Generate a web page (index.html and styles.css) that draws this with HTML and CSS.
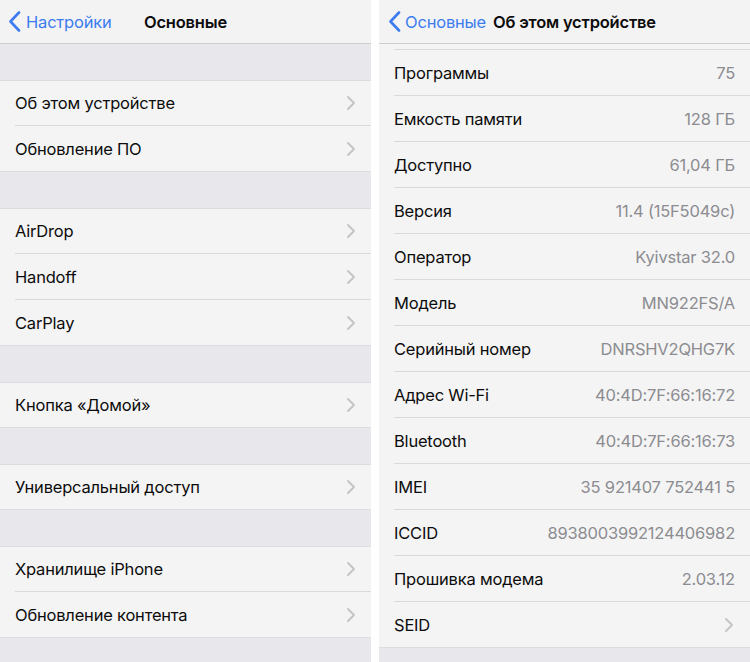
FILE: index.html
```html
<!DOCTYPE html>
<html lang="ru">
<head>
<meta charset="utf-8">
<title>Настройки</title>
<link rel="stylesheet" href="styles.css">
</head>
<body>
<div class="screens">
  <section class="panel">
    <header class="nav">
      <a class="back"><svg class="back-icon" viewBox="0 0 13 21" width="13" height="21"><path d="M11 1.5 L2.5 10.5 L11 19.5" fill="none" stroke="currentColor" stroke-width="2.6" stroke-linecap="round" stroke-linejoin="round"/></svg><span>Настройки</span></a>
      <h1 class="title title-center">Основные</h1>
    </header>
    <div class="content">
      <ul class="group">
        <li class="row"><span class="label">Об этом устройстве</span><svg class="chev" viewBox="0 0 8 14" width="8" height="14"><path d="M1 1 L7 7 L1 13" fill="none" stroke="currentColor" stroke-width="1.8" stroke-linecap="round" stroke-linejoin="round"/></svg></li>
        <li class="row"><span class="label">Обновление ПО</span><svg class="chev" viewBox="0 0 8 14" width="8" height="14"><path d="M1 1 L7 7 L1 13" fill="none" stroke="currentColor" stroke-width="1.8" stroke-linecap="round" stroke-linejoin="round"/></svg></li>
      </ul>
      <ul class="group">
        <li class="row"><span class="label">AirDrop</span><svg class="chev" viewBox="0 0 8 14" width="8" height="14"><path d="M1 1 L7 7 L1 13" fill="none" stroke="currentColor" stroke-width="1.8" stroke-linecap="round" stroke-linejoin="round"/></svg></li>
        <li class="row"><span class="label">Handoff</span><svg class="chev" viewBox="0 0 8 14" width="8" height="14"><path d="M1 1 L7 7 L1 13" fill="none" stroke="currentColor" stroke-width="1.8" stroke-linecap="round" stroke-linejoin="round"/></svg></li>
        <li class="row"><span class="label">CarPlay</span><svg class="chev" viewBox="0 0 8 14" width="8" height="14"><path d="M1 1 L7 7 L1 13" fill="none" stroke="currentColor" stroke-width="1.8" stroke-linecap="round" stroke-linejoin="round"/></svg></li>
      </ul>
      <ul class="group">
        <li class="row"><span class="label">Кнопка «Домой»</span><svg class="chev" viewBox="0 0 8 14" width="8" height="14"><path d="M1 1 L7 7 L1 13" fill="none" stroke="currentColor" stroke-width="1.8" stroke-linecap="round" stroke-linejoin="round"/></svg></li>
      </ul>
      <ul class="group">
        <li class="row"><span class="label">Универсальный доступ</span><svg class="chev" viewBox="0 0 8 14" width="8" height="14"><path d="M1 1 L7 7 L1 13" fill="none" stroke="currentColor" stroke-width="1.8" stroke-linecap="round" stroke-linejoin="round"/></svg></li>
      </ul>
      <ul class="group">
        <li class="row"><span class="label">Хранилище iPhone</span><svg class="chev" viewBox="0 0 8 14" width="8" height="14"><path d="M1 1 L7 7 L1 13" fill="none" stroke="currentColor" stroke-width="1.8" stroke-linecap="round" stroke-linejoin="round"/></svg></li>
        <li class="row"><span class="label">Обновление контента</span><svg class="chev" viewBox="0 0 8 14" width="8" height="14"><path d="M1 1 L7 7 L1 13" fill="none" stroke="currentColor" stroke-width="1.8" stroke-linecap="round" stroke-linejoin="round"/></svg></li>
      </ul>
    </div>
  </section>

  <section class="panel">
    <header class="nav nav-left">
      <a class="back back-right"><svg class="back-icon" viewBox="0 0 13 21" width="13" height="21"><path d="M11 1.5 L2.5 10.5 L11 19.5" fill="none" stroke="currentColor" stroke-width="2.6" stroke-linecap="round" stroke-linejoin="round"/></svg><span>Основные</span></a>
      <h1 class="title">Об этом устройстве</h1>
    </header>
    <div class="content">
      <ul class="group group-scrolled">
        <li class="row row-stub"></li>
        <li class="row"><span class="label">Программы</span><span class="value">75</span></li>
        <li class="row"><span class="label">Емкость памяти</span><span class="value">128 ГБ</span></li>
        <li class="row"><span class="label">Доступно</span><span class="value">61,04 ГБ</span></li>
        <li class="row"><span class="label">Версия</span><span class="value">11.4 (15F5049c)</span></li>
        <li class="row"><span class="label">Оператор</span><span class="value">Kyivstar 32.0</span></li>
        <li class="row"><span class="label">Модель</span><span class="value">MN922FS/A</span></li>
        <li class="row"><span class="label">Серийный номер</span><span class="value">DNRSHV2QHG7K</span></li>
        <li class="row"><span class="label">Адрес Wi-Fi</span><span class="value">40:4D:7F:66:16:72</span></li>
        <li class="row"><span class="label">Bluetooth</span><span class="value">40:4D:7F:66:16:73</span></li>
        <li class="row"><span class="label">IMEI</span><span class="value">35 921407 752441 5</span></li>
        <li class="row"><span class="label">ICCID</span><span class="value">8938003992124406982</span></li>
        <li class="row"><span class="label">Прошивка модема</span><span class="value">2.03.12</span></li>
        <li class="row"><span class="label">SEID</span><svg class="chev" viewBox="0 0 8 14" width="8" height="14"><path d="M1 1 L7 7 L1 13" fill="none" stroke="currentColor" stroke-width="1.8" stroke-linecap="round" stroke-linejoin="round"/></svg></li>
      </ul>
    </div>
  </section>
</div>
</body>
</html>
```

FILE: styles.css
```css
* { box-sizing: border-box; }
html, body { margin: 0; padding: 0; background: #ffffff; }
body {
  font-family: "Inter", "Roboto", "Liberation Sans", sans-serif;
  -webkit-font-smoothing: antialiased;
}
.screens {
  display: flex;
  gap: 8px;
  width: 750px;
  height: 662px;
  overflow: hidden;
}
.panel {
  width: 371px;
  flex: 0 0 371px;
  height: 662px;
  background: #e7e7ec;
  display: flex;
  flex-direction: column;
  overflow: hidden;
}
.panel:last-child { flex: 1 1 auto; }
.nav {
  height: 44px;
  flex: 0 0 44px;
  background: #f3f3f3;
  border-bottom: 1px solid #cdcdd0;
  display: flex;
  align-items: center;
  position: relative;
}
.back {
  display: flex;
  align-items: center;
  color: #3c7cf0;
  font-size: 16.5px;
  letter-spacing: -0.2px;
  padding-left: 8px;
  gap: 5px;
}
.back-icon { display: block; }
.back-right { padding-left: 9px; gap: 4px; }
.title {
  margin: 0;
  font-size: 16.5px;
  font-weight: 600;
  letter-spacing: -0.2px;
  color: #0c0c0c;
}
.title-center {
  position: absolute;
  left: 0;
  right: 0;
  text-align: center;
  pointer-events: none;
}
.nav-left .title { margin-left: 7px; }
.content {
  flex: 1 1 auto;
  display: flex;
  flex-direction: column;
}
.group {
  list-style: none;
  margin: 36px 0 0 0;
  padding: 0;
  background: #f4f4f4;
  box-shadow: inset 0 1px 0 #dcdce0, inset 0 -1px 0 #dcdce0;
}
.group-scrolled { margin-top: 0; box-shadow: inset 0 -1px 0 #dcdce0; }
.row {
  height: 46px;
  display: flex;
  align-items: center;
  justify-content: space-between;
  padding: 0 16px 1px 15px;
  position: relative;
  font-size: 16.5px;
  letter-spacing: -0.2px;
  color: #0c0c0c;
}
.row + .row::before {
  content: "";
  position: absolute;
  left: 15px;
  right: 0;
  top: -1px;
  height: 1px;
  background: #d9d9dd;
}
.row-stub { height: 6px; padding: 0; }
.value { color: #8c8c91; }
.chev { color: #c3c3c8; display: block; }
.group-scrolled .row { padding-right: 15px; }
.group-scrolled .row-stub { padding: 0; }
.group-scrolled .chev { margin-right: 2px; }
```
